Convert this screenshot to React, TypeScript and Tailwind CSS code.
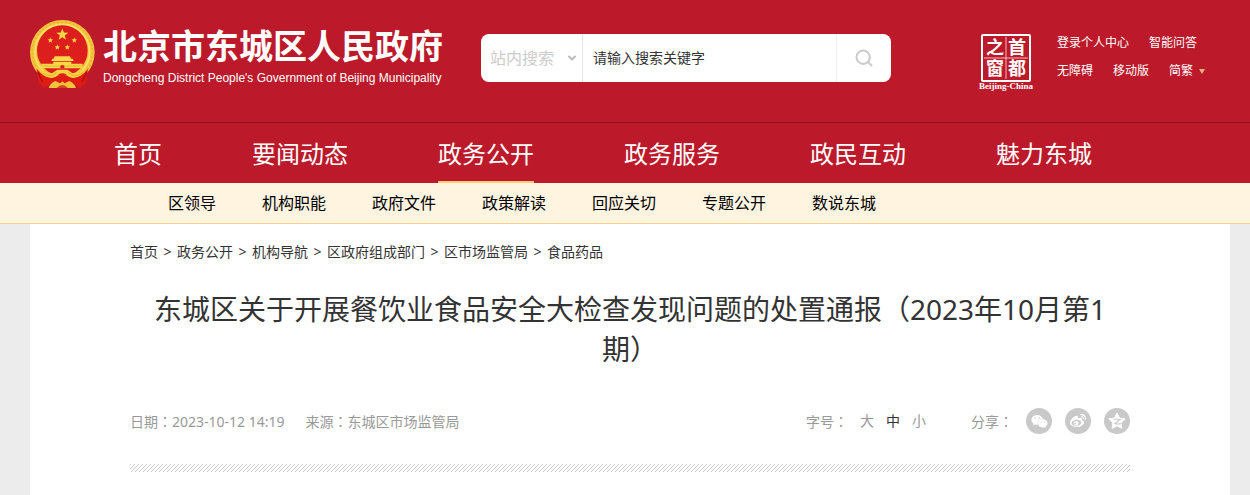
import {FaWeibo, FaWeixin} from "react-icons/fa";
import {LuChevronDown, LuSearch} from "react-icons/lu";

const navItems = ["首页", "要闻动态", "政务公开", "政务服务", "政民互动", "魅力东城"];
const subNavItems = ["区领导", "机构职能", "政府文件", "政策解读", "回应关切", "专题公开", "数说东城"];
const crumbs = ["首页", "政务公开", "机构导航", "区政府组成部门", "区市场监管局", "食品药品"];
const sizes = ["大", "中", "小"];

// Points of a five-pointed star
const star = (cx: number, cy: number, r: number, ratio = 0.4) =>
  Array.from({length: 10}, (_, i) => {
    const radius = i % 2 ? r * ratio : r;
    const angle = (Math.PI / 5) * i - Math.PI / 2;

    return `${cx + radius * Math.cos(angle)},${cy + radius * Math.sin(angle)}`;
  }).join(" ");

// Full-width colon centred in its box
function Colon() {
  return <span className="font-['Noto_Sans_CJK_TC',sans-serif]">：</span>;
}

function Emblem() {
  return (
    <svg aria-hidden="true" className="h-[69px] w-[66px] shrink-0" viewBox="0 0 198 207">
      <circle cx="97" cy="97" fill="#f3c53c" r="97" />
      <circle cx="97" cy="97" fill="none" r="90" stroke="#e9b634" strokeDasharray="5 7" strokeWidth="6" />
      <circle cx="97" cy="95" fill="none" r="82" stroke="#fae06a" strokeWidth="5" />
      <circle cx="97" cy="92" fill="#dc1f1c" r="76" />
      <g fill="#f8d848">
        <polygon points={star(97, 44, 19)} />
        <polygon points={star(61, 61, 9)} />
        <polygon points={star(133, 61, 9)} />
        <polygon points={star(82, 82, 9)} />
        <polygon points={star(112, 82, 9)} />
        <path d="M74 109H120L123 116H128L131 123H64L67 116H71Z" />
        <path d="M70 125H124V131H158V145H34V131H70Z" />
      </g>
      <path d="M36 138H158" stroke="#e5a52c" strokeWidth="2" />
      <path d="M91 145V138Q97 132 103 138V145Z" fill="#dc1f1c" />
      {/* Red ribbon ends under the wreath */}
      <path d="M20 146 Q40 172 66 172 L97 164 L128 172 Q154 172 174 146 L168 190 L148 204 L130 190 L97 198 L64 190 L46 204 L26 190Z" fill="#df1c14" />
      <path d="M24 158L38 186M170 158L156 186" stroke="#a9120f" strokeWidth="4" />
      {/* Gold swags meeting at the knot */}
      <path d="M24 142 Q40 156 66 160 L82 149 H112 L128 160 Q154 156 170 142 Q160 172 130 174 Q114 172 108 163 Q97 156 86 163 Q80 172 64 174 Q34 172 24 142Z" fill="#f7d33f" />
      <path d="M34 158 Q48 168 66 167 L80 157M160 158 Q146 168 128 167 L114 157" fill="none" stroke="#e0a02a" strokeWidth="2" />
      {/* Lower bow */}
      <path d="M56 204 Q60 190 76 183 L90 190 L97 184 L104 190 L118 183 Q134 190 138 204Z" fill="#f3c33a" />
      <path d="M80 204 Q97 186 114 204Z" fill="#d9431f" />
    </svg>
  );
}

function CapitalWindow() {
  return (
    <svg aria-label="首都之窗" className="h-[58px] w-[56px] shrink-0" role="img" viewBox="0 0 56 58">
      <rect fill="none" height="46" rx="1" stroke="#fff" strokeWidth="2" width="48" x="4" y="2" />
      <path d="M28 4V46M6 25H50" stroke="#f3b9be" strokeWidth="1" />
      <g
        className="font-['Noto_Sans_CJK_SC',sans-serif]"
        fill="#fff"
        fontSize="18"
        fontWeight="700"
        textAnchor="middle"
      >
        <text x="17" y="21">之</text>
        <text x="39" y="21">首</text>
        <text x="17" y="42">窗</text>
        <text x="39" y="42">都</text>
      </g>
      <text
        className="font-['Liberation_Serif',serif]"
        fill="#fff"
        fontSize="9"
        fontWeight="700"
        textAnchor="middle"
        x="28"
        y="56"
      >
        Beijing-China
      </text>
    </svg>
  );
}

function SearchForm() {
  return (
    <form
      className="flex h-12 w-[410px] overflow-hidden rounded-lg bg-white"
      onSubmit={(e) => e.preventDefault()}
    >
      <div className="relative flex w-[102px] border-r border-[#e5e5e5]">
        <select aria-label="搜索范围" className="w-full appearance-none pl-[9px] text-base text-[#ccc] outline-none">
          <option>站内搜索</option>
        </select>
        <LuChevronDown
          className="pointer-events-none absolute top-[18px] right-1 size-3 text-[#bbb]"
          strokeWidth={4}
        />
      </div>
      <input
        aria-label="请输入搜索关键字"
        className="min-w-0 flex-1 px-[10px] text-sm outline-none placeholder:text-[#333]"
        placeholder="请输入搜索关键字"
        type="text"
      />
      <button
        aria-label="搜索"
        className="flex w-[55px] items-center justify-center border-l border-[#eee] text-[#ccc]"
        type="submit"
      >
        <LuSearch className="size-5" strokeWidth={2.5} />
      </button>
    </form>
  );
}

function ShareButton({label, children}: {label: string; children: React.ReactNode}) {
  return (
    <button
      aria-label={label}
      className="flex size-[26px] items-center justify-center rounded-full bg-[#c9c9c9] text-white"
      type="button"
    >
      {children}
    </button>
  );
}

export default function App() {
  return (
    <div className="min-h-screen bg-[#ececec] font-['Noto_Sans','Noto_Sans_CJK_SC',sans-serif] text-[#333]">
      <header className="bg-[#bc1a2b] text-white">
        <div className="flex h-[123px] items-start border-b border-[#8f1020] pr-[43px] pl-[30px]">
          <a className="mt-5 flex" href="#home">
            <Emblem />
            <span className="ml-[7px] block">
              <span className="block pt-1 text-[34px] leading-[44px] font-bold whitespace-nowrap">
                北京市东城区人民政府
              </span>
              <span className="block font-['Liberation_Sans',sans-serif] text-xs leading-5 whitespace-nowrap">
                Dongcheng District People&apos;s Government of Beijing Municipality
              </span>
            </span>
          </a>
          <div className="mt-[34px] ml-[38px]">
            <SearchForm />
          </div>
          <div className="mt-[33px] ml-auto flex">
            <CapitalWindow />
            <div className="ml-[23px] w-[150px] text-xs leading-5">
              <div className="flex gap-5">
                <a href="#login">登录个人中心</a>
                <a href="#ask">智能问答</a>
              </div>
              <div className="mt-2 flex gap-5">
                <a href="#accessible">无障碍</a>
                <a href="#mobile">移动版</a>
                <a className="flex items-center gap-1.5" href="#lang">
                  简繁
                  <span className="border-x-3 border-t-5 border-x-transparent border-t-[#e0b277]" />
                </a>
              </div>
            </div>
          </div>
        </div>
        <nav className="flex h-[60px] gap-[90px] pl-[114px] text-2xl leading-[62px]">
          {navItems.map((item) => (
            <a
              key={item}
              className={
                item === "政务公开"
                  ? "border-b-2 border-[#ffcb7d] whitespace-nowrap"
                  : "whitespace-nowrap"
              }
              href="#nav"
            >
              {item}
            </a>
          ))}
        </nav>
      </header>

      <nav className="flex h-[41px] gap-[46px] border-b border-[#fbcf8b] bg-[#fef4e0] pl-[168px] text-base leading-10 text-black">
        {subNavItems.map((item) => (
          <a key={item} className="whitespace-nowrap" href="#sub">
            {item}
          </a>
        ))}
      </nav>

      <main className="mr-5 ml-[30px] min-h-[271px] bg-white px-[100px] pt-[18px]">
        <div className="flex gap-[5px] text-sm leading-5">
          {crumbs.map((item, i) => (
            <span key={item} className="flex gap-[5px]">
              {i > 0 && <span className="w-[9px] text-center">&gt;</span>}
              <a href="#crumb">{item}</a>
            </span>
          ))}
        </div>

        <h1 className="mt-[27px] px-5 text-center text-[28px] leading-10">
          东城区关于开展餐饮业食品安全大检查发现问题的处置通报（2023年10月第1期）
        </h1>

        <div className="mt-[39px] flex h-[26px] items-center text-sm leading-5 text-[#999]">
          <span>
            日期
            <Colon />
            2023-10-12 14:19
          </span>
          <span className="ml-[21px]">
            来源
            <Colon />
            东城区市场监管局
          </span>
          <div className="ml-auto flex gap-3">
            <span>
              字号
              <Colon />
            </span>
            {sizes.map((size) => (
              <button key={size} className={size === "中" ? "text-[#333]" : ""} type="button">
                {size}
              </button>
            ))}
          </div>
          <div className="ml-[45px] flex items-center gap-[13px]">
            <span>
              分享
              <Colon />
            </span>
            <ShareButton label="微信">
              <FaWeixin className="size-[17px]" />
            </ShareButton>
            <ShareButton label="微博">
              <FaWeibo className="size-4" />
            </ShareButton>
            <ShareButton label="QQ空间">
              <svg className="size-[18px]" viewBox="0 0 18 18">
                <polygon
                  fill="#fff"
                  points={star(9, 9.5, 8.5, 0.5)}
                  stroke="#fff"
                  strokeLinejoin="round"
                />
                <path d="M5.500 7.500Q9 6.500 12 7.500L7 11.500Q10 12.500 13.500 11.500" fill="none" stroke="#c9c9c9" strokeWidth="1.200" />
              </svg>
            </ShareButton>
          </div>
        </div>

        <div className="mt-[30px] h-2 bg-[linear-gradient(135deg,#ccc_12.5%,transparent_12.5%_50%,#ccc_50%_62.5%,transparent_62.5%)] bg-[size:4px_4px]" />
      </main>
    </div>
  );
}
